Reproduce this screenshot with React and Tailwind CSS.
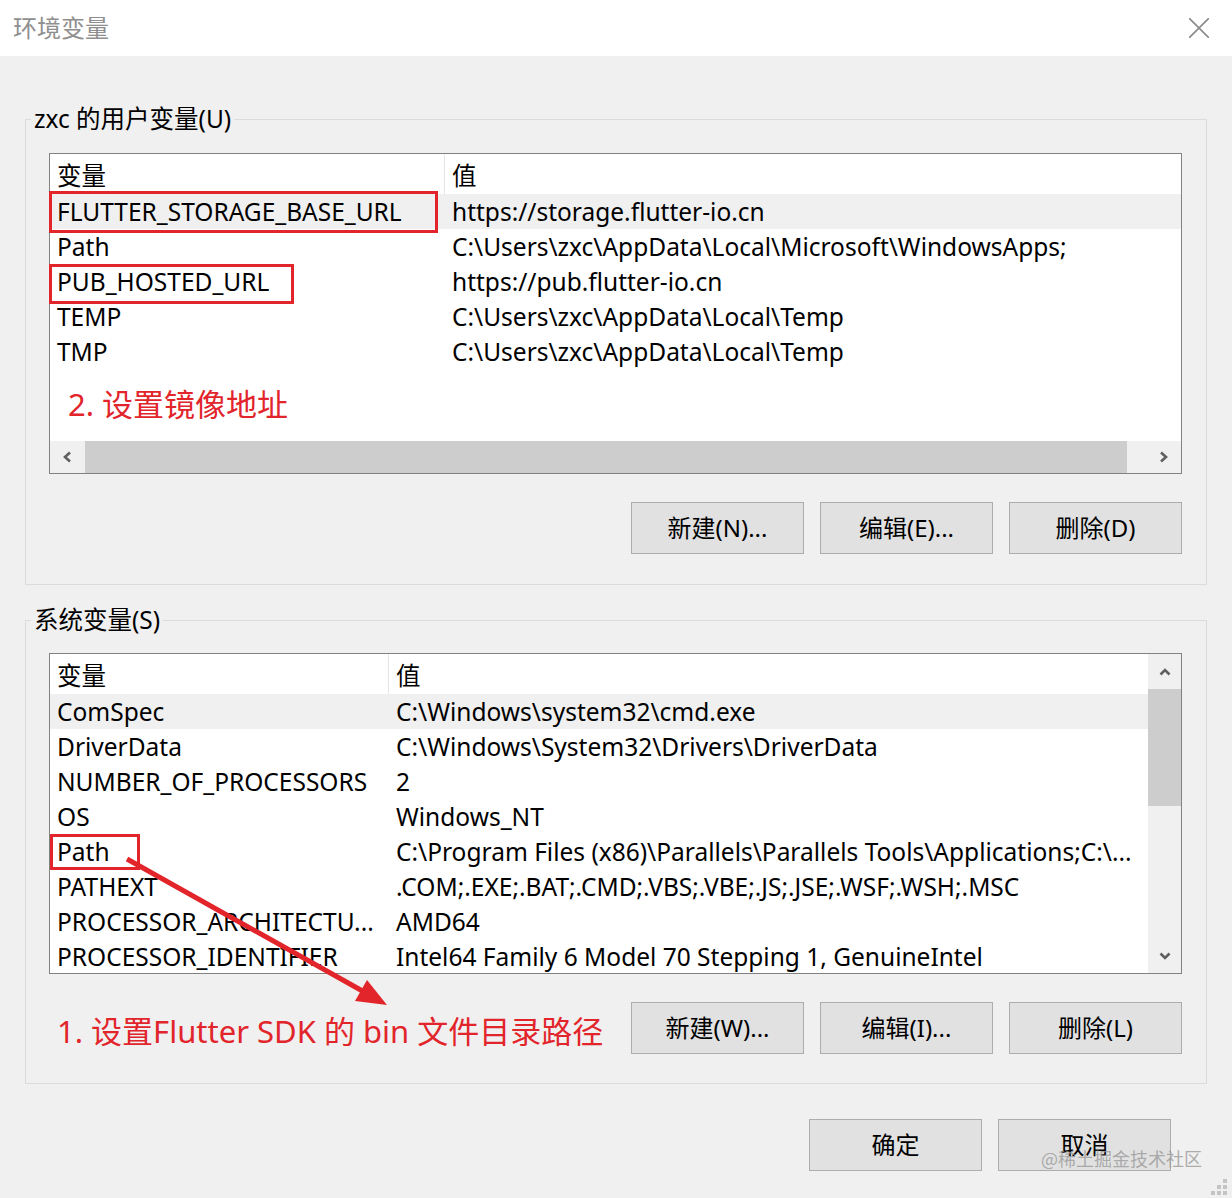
import React from 'react';

const userVars = [
  { name: 'FLUTTER_STORAGE_BASE_URL', value: 'https://storage.flutter-io.cn', mark: 'left-[-1px] top-[-3px] w-[389px] h-[42px]' },
  { name: 'Path', value: 'C:\\Users\\zxc\\AppData\\Local\\Microsoft\\WindowsApps;' },
  { name: 'PUB_HOSTED_URL', value: 'https://pub.flutter-io.cn', mark: 'left-[-1px] top-[0px] w-[245px] h-[40px]' },
  { name: 'TEMP', value: 'C:\\Users\\zxc\\AppData\\Local\\Temp' },
  { name: 'TMP', value: 'C:\\Users\\zxc\\AppData\\Local\\Temp' },
];

const sysVars = [
  { name: 'ComSpec', value: 'C:\\Windows\\system32\\cmd.exe' },
  { name: 'DriverData', value: 'C:\\Windows\\System32\\Drivers\\DriverData' },
  { name: 'NUMBER_OF_PROCESSORS', value: '2' },
  { name: 'OS', value: 'Windows_NT' },
  { name: 'Path', value: 'C:\\Program Files (x86)\\Parallels\\Parallels Tools\\Applications;C:\\...', mark: 'left-[0px] top-[0px] w-[90px] h-[36px]' },
  { name: 'PATHEXT', value: '.COM;.EXE;.BAT;.CMD;.VBS;.VBE;.JS;.JSE;.WSF;.WSH;.MSC' },
  { name: 'PROCESSOR_ARCHITECTU...', value: 'AMD64' },
  { name: 'PROCESSOR_IDENTIFIER', value: 'Intel64 Family 6 Model 70 Stepping 1, GenuineIntel' },
];

function Chevron({ dir }) {
  const paths = {
    left: 'M8 1.5 L3 6 L8 10.5',
    right: 'M4 1.5 L9 6 L4 10.5',
    up: 'M1.5 8.5 L6 4 L10.5 8.5',
    down: 'M1.5 3.5 L6 8 L10.5 3.5',
  };
  return (
    <svg width="12" height="12" viewBox="0 0 12 12">
      <path d={paths[dir]} fill="none" stroke="#5f5f5f" strokeWidth="2.6" />
    </svg>
  );
}

function Btn({ children }) {
  return (
    <button className="w-[173px] h-[52px] shrink-0 bg-[#e1e1e1] border border-[#adadad] text-[24px] leading-[50px] text-black flex items-center justify-center">
      {children}
    </button>
  );
}

function Row({ item, cols, selected }) {
  return (
    <div className={`grid ${cols} h-[35px] leading-[35px] ${selected ? 'bg-[#f0f0f0]' : ''}`}>
      <div className="relative h-[35px] pl-[7px] whitespace-nowrap">
        {item.name}
        {item.mark && <div className={`absolute border-[3px] border-[#e2242b] ${item.mark}`} />}
      </div>
      <div className="h-[35px] pl-[7px] whitespace-nowrap overflow-hidden">{item.value}</div>
    </div>
  );
}

function Header({ cols }) {
  return (
    <div className={`grid ${cols} h-[40px] leading-[40px]`}>
      <div className="pl-[7px] pt-[2px] border-r border-[#e5e5e5]">变量</div>
      <div className="pl-[7px] pt-[2px]">值</div>
    </div>
  );
}

export default function App() {
  return (
    <div className="relative w-[1232px] h-[1198px] bg-[#f0f0f0] overflow-hidden text-black font-['Noto_Sans','Noto_Sans_CJK_SC',sans-serif] text-[24.5px] leading-none">
      <div className="h-[56px] bg-white flex items-center justify-between pl-[13px] pr-[23px]">
        <span className="text-[#8f8f8f] text-[24px] leading-[32px]">环境变量</span>
        <svg width="20" height="20" viewBox="0 0 20 20">
          <path d="M0 0 L20 20 M20 0 L0 20" stroke="#8a8a8a" strokeWidth="1.6" />
        </svg>
      </div>

      <div className="px-[25px]">
        <fieldset className="mt-[48px] border border-[#dcdcdc] pl-[23px] pr-[24px] pb-[30px]">
          <legend className="ml-[-18px] px-[3px] h-[30px] leading-[30px]">zxc 的用户变量(U)</legend>
          <div className="mt-[19px] h-[321px] border border-[#828282] bg-white flex flex-col">
            <Header cols="grid-cols-[395px_1fr]" />
            {userVars.map((v, i) => (
              <Row key={v.name} item={v} cols="grid-cols-[395px_1fr]" selected={i === 0} />
            ))}
            <div className="mt-[15px] pl-[18px] text-[31px] leading-[40px] text-[#e2242b]">2. 设置镜像地址</div>
            <div className="mt-auto h-[32px] flex bg-[#f0f0f0]">
              <div className="w-[35px] flex items-center justify-center"><Chevron dir="left" /></div>
              <div className="w-[1042px] bg-[#cdcdcd]" />
              <div className="flex-1 flex items-center justify-end pr-[12px]"><Chevron dir="right" /></div>
            </div>
          </div>
          <div className="mt-[28px] flex justify-end gap-[16px]">
            <Btn>新建(N)...</Btn>
            <Btn>编辑(E)...</Btn>
            <Btn>删除(D)</Btn>
          </div>
        </fieldset>

        <fieldset className="mt-[20px] border border-[#dcdcdc] pl-[23px] pr-[24px] pb-[29px]">
          <legend className="ml-[-18px] px-[3px] h-[30px] leading-[30px]">系统变量(S)</legend>
          <div className="mt-[18px] h-[321px] border border-[#828282] bg-white flex">
            <div className="flex-1 flex flex-col overflow-hidden">
              <Header cols="grid-cols-[339px_1fr]" />
              {sysVars.map((v, i) => (
                <Row key={v.name} item={v} cols="grid-cols-[339px_1fr]" selected={i === 0} />
              ))}
            </div>
            <div className="w-[33px] bg-[#f0f0f0] flex flex-col">
              <div className="h-[35px] flex items-center justify-center"><Chevron dir="up" /></div>
              <div className="h-[117px] bg-[#cdcdcd]" />
              <div className="mt-auto h-[35px] flex items-center justify-center"><Chevron dir="down" /></div>
            </div>
          </div>
          <div className="mt-[28px] flex items-center gap-[16px]">
            <div className="flex-1 pl-[8px] pt-[5px] text-[31px] leading-[40px] text-[#e2242b] whitespace-nowrap">1. 设置Flutter SDK 的 bin 文件目录路径</div>
            <Btn>新建(W)...</Btn>
            <Btn>编辑(I)...</Btn>
            <Btn>删除(L)</Btn>
          </div>
        </fieldset>

        <div className="mt-[35px] flex justify-end gap-[16px] pr-[36px]">
          <Btn>确定</Btn>
          <Btn>取消</Btn>
        </div>
      </div>

      <svg className="absolute left-0 top-0 pointer-events-none" width="1232" height="1198">
        <line x1="127" y1="859" x2="366" y2="993" stroke="#e2242b" strokeWidth="5" />
        <polygon points="387,1005 355,1001 367,980" fill="#e2242b" />
      </svg>

      <div className="absolute left-[1041px] top-[1146px] text-[18px] leading-[24px] text-[#9a9a9a]/80 whitespace-nowrap font-['Noto_Sans_CJK_SC',sans-serif]">
        @稀土掘金技术社区
      </div>

      <svg className="absolute left-[1211px] top-[1179px]" width="18" height="18" viewBox="0 0 18 18">
        <rect x="12" y="0" width="4" height="4" fill="#c4c4c4" />
        <rect x="6" y="6" width="4" height="4" fill="#c4c4c4" />
        <rect x="12" y="6" width="4" height="4" fill="#c4c4c4" />
        <rect x="0" y="12" width="4" height="4" fill="#c4c4c4" />
        <rect x="6" y="12" width="4" height="4" fill="#c4c4c4" />
        <rect x="12" y="12" width="4" height="4" fill="#c4c4c4" />
      </svg>
    </div>
  );
}
